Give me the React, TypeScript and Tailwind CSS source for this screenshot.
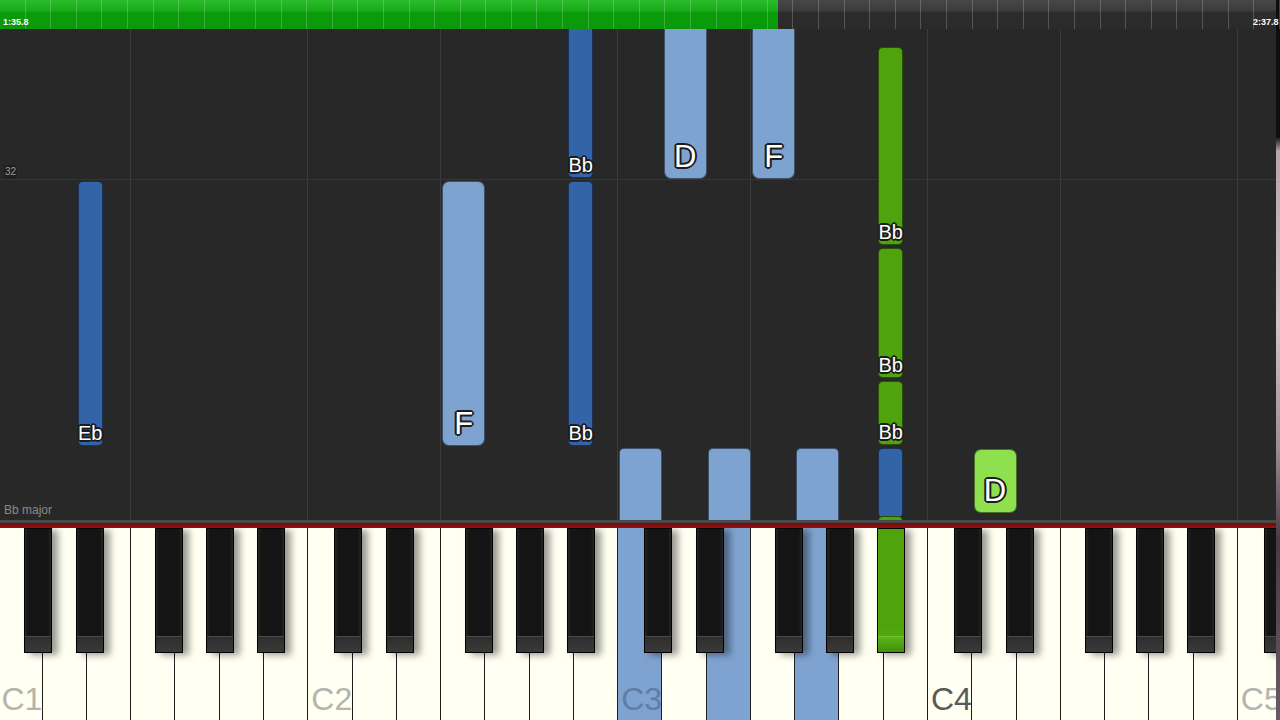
import React from "react";

// keyboard geometry (measured from the screenshot)
const W = 44.28;
const X0 = -1.6;
const TOP = 29; // roll starts under the progress bar

// black key: [white boundary index within octave, offset from that boundary]
const BLACK: [number, number][] = [
  [1, -18.7],
  [2, -10.7],
  [4, -20.7],
  [5, -14],
  [6, -7.3],
];

const wx = (i: number) => X0 + i * W;
const bx = (oct: number, j: number) =>
  X0 + (oct * 7 + BLACK[j][0]) * W + BLACK[j][1];

type Note = {
  x: number;
  w: number;
  y1: number;
  y2: number;
  color: string;
  label?: string;
  big?: boolean;
};

const COLORS: Record<string, string> = {
  dark: "bg-[#3464a8]",
  light: "bg-[#7fa3d0]",
  green: "bg-[#4fa40d]",
  lime: "bg-[#8fe04f]",
};

const notes: Note[] = [
  { x: bx(0, 1) + 1.5, w: 25, y1: 181, y2: 446, color: "dark", label: "Eb" },
  { x: wx(10) + 1, w: 43, y1: 181, y2: 446, color: "light", label: "F", big: true },
  { x: bx(1, 4) + 1.5, w: 25, y1: 18, y2: 178, color: "dark", label: "Bb" },
  { x: bx(1, 4) + 1.5, w: 25, y1: 181, y2: 446, color: "dark", label: "Bb" },
  { x: wx(15) + 1, w: 43, y1: 18, y2: 179, color: "light", label: "D", big: true },
  { x: wx(17) + 1, w: 43, y1: 18, y2: 179, color: "light", label: "F", big: true },
  { x: wx(14) + 1, w: 43, y1: 448, y2: 540, color: "light" },
  { x: wx(16) + 1, w: 43, y1: 448, y2: 540, color: "light" },
  { x: wx(18) + 1, w: 43, y1: 448, y2: 540, color: "light" },
  { x: bx(2, 4) + 1.5, w: 25, y1: 47, y2: 245, color: "green", label: "Bb" },
  { x: bx(2, 4) + 1.5, w: 25, y1: 248, y2: 378, color: "green", label: "Bb" },
  { x: bx(2, 4) + 1.5, w: 25, y1: 381, y2: 445, color: "green", label: "Bb" },
  { x: bx(2, 4) + 1.5, w: 25, y1: 448, y2: 518, color: "dark" },
  { x: bx(2, 4) + 1.5, w: 25, y1: 516, y2: 560, color: "green" },
  { x: wx(22) + 1, w: 43, y1: 449, y2: 513, color: "lime", label: "D", big: true },
];

const litWhite: Record<number, string> = {
  14: "bg-[#7fa3d0]",
  16: "bg-[#7fa3d0]",
  18: "bg-[#7fa3d0]",
};

const labelColor: Record<number, string> = {
  0: "text-[#b4b4ae]",
  7: "text-[#b4b4ae]",
  14: "text-[#5e7ea8]",
  21: "text-[#5a5a58]",
  28: "text-[#b4b4ae]",
};

const outline =
  "[text-shadow:2px_0_0_#1c1c1c,-2px_0_0_#1c1c1c,0_2px_0_#1c1c1c,0_-2px_0_#1c1c1c,1.4px_1.4px_0_#1c1c1c,-1.4px_-1.4px_0_#1c1c1c,1.4px_-1.4px_0_#1c1c1c,-1.4px_1.4px_0_#1c1c1c]";

export default function App() {
  const gridLines: number[] = [];
  for (let k = 0; k < 5; k++) {
    gridLines.push(wx(k * 7));
    gridLines.push(wx(k * 7 + 3));
  }

  const blackKeys: { left: number; lit: boolean }[] = [];
  for (let k = 0; k < 5; k++) {
    BLACK.forEach((_, j) => {
      const left = bx(k, j);
      if (left < 1280) blackKeys.push({ left, lit: k === 2 && j === 4 });
    });
  }

  return (
    <div className="flex h-[720px] w-[1280px] overflow-hidden bg-[#282828] font-['Liberation_Sans',Arial,sans-serif]">
      <div className="flex w-[1276px] shrink-0 flex-col">
        {/* progress bar */}
        <div className="relative flex h-[29px] shrink-0">
          <div className="w-[778px] bg-[linear-gradient(#2cbc2c,#17aa17_38%,#0b9b0b_42%,#0a990a)]" />
          <div className="flex-1 bg-[linear-gradient(#484848,#3b3b3b_38%,#2d2d2d_42%,#2a2a2a)]" />
          <div className="absolute inset-0 flex">
            {Array.from({ length: 50 }).map((_, i) => (
              <div key={i} className="w-[25.6px] shrink-0 border-r border-white/20" />
            ))}
          </div>
          <span className="absolute bottom-[2px] left-[3px] text-[9px] font-bold leading-none text-white">
            1:35.8
          </span>
          <span className="absolute bottom-[2px] left-[1253px] text-[9px] font-bold leading-none text-white">
            2:37.8
          </span>
        </div>

        {/* note roll */}
        <div className="relative flex-1 overflow-hidden bg-[#282828]">
          {gridLines.map((x, i) => (
            <div
              key={i}
              className="absolute top-0 bottom-0 w-px bg-[#3c3c3c]"
              style={{ left: Math.round(x) - 1 }}
            />
          ))}
          <div className="absolute left-0 right-0 top-[150px] h-px bg-[#363636]" />
          <span className="absolute left-[4px] top-[136px] bg-black/20 px-px text-[10px] leading-[14px] text-[#9a9a9a]">
            32
          </span>
          <span className="absolute bottom-[1px] left-[4px] text-[12px] text-[#8a8a8a]">
            Bb major
          </span>

          {notes.map((n, i) => (
            <div
              key={i}
              className={`absolute flex flex-col items-center justify-end border border-black/50 ${
                n.big ? "rounded-[7px]" : "rounded-[5px]"
              } ${COLORS[n.color]}`}
              style={{ left: n.x, width: n.w, top: n.y1 - TOP, height: n.y2 - n.y1 }}
            >
              {n.label && (
                <span
                  className={`whitespace-nowrap leading-none text-white ${outline} ${
                    n.big ? "pb-[6px] text-[31px]" : "pb-[2px] text-[20px]"
                  }`}
                >
                  {n.label}
                </span>
              )}
            </div>
          ))}
        </div>

        {/* keyboard */}
        <div className="h-[3px] shrink-0 bg-[#4a4a4a]" />
        <div className="h-[5px] shrink-0 bg-[linear-gradient(#6e0a0c,#9a1014)]" />
        <div className="relative h-[192px] shrink-0 overflow-hidden">
          <div className="ml-[-1.6px] flex h-full">
            {Array.from({ length: 29 }).map((_, i) => (
              <div
                key={i}
                className={`flex h-full w-[44.28px] shrink-0 flex-col justify-end border-r border-[#1e1e1e] pb-[5px] pl-[3px] ${
                  litWhite[i] ?? "bg-[#fffff2]"
                }`}
              >
                {i % 7 === 0 && (
                  <span className={`text-[32px] leading-none ${labelColor[i]}`}>
                    C{i / 7 + 1}
                  </span>
                )}
              </div>
            ))}
          </div>
          {blackKeys.map((b, i) => (
            <div
              key={i}
              className={`absolute top-0 flex h-[125px] w-[28px] flex-col justify-end border border-black shadow-[6px_2px_7px_rgba(0,0,0,0.4)] ${
                b.lit
                  ? "bg-[linear-gradient(#4fa40d,#4fa40d_80%,#58b012)]"
                  : "bg-[linear-gradient(90deg,#262626,#141414_12%,#141414_88%,#262626)]"
              }`}
              style={{ left: b.left }}
            >
              <div
                className={`h-[16px] border-t ${
                  b.lit
                    ? "border-[#6cc42a] bg-[linear-gradient(#5bb51a,#3f900a)]"
                    : "border-[#4a4a4a] bg-[linear-gradient(#2e2e2e,#3a3a3a)]"
                }`}
              />
            </div>
          ))}
        </div>
      </div>
      <div className="w-[4px] bg-[linear-gradient(#0e0e0e_0,#101010_19%,#b8a4ae_21%,#d0c4ca_45%,#9c8c96_62%,#4a3a46_75%,#6a5a64_100%)]" />
    </div>
  );
}
